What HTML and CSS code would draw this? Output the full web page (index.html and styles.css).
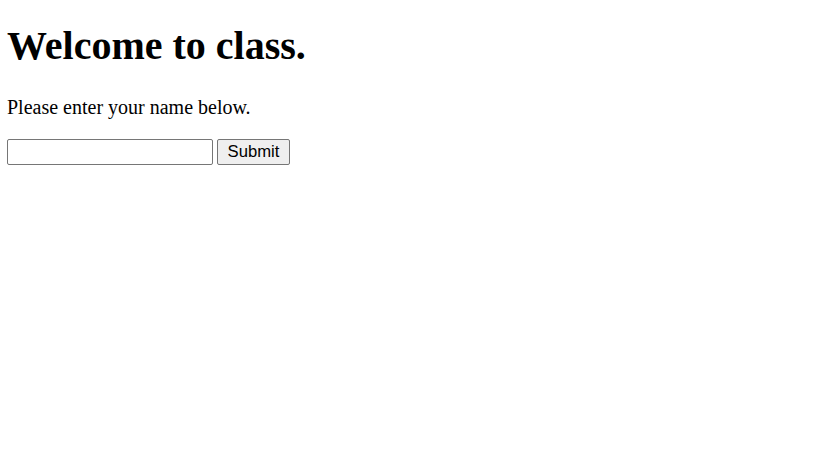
FILE: index.html
```html
<!DOCTYPE html>
<html>
<head>
<meta charset="utf-8">
<link rel="stylesheet" href="styles.css">
</head>
<body>
<h1 class="title">Welcome to class.</h1>
<p class="intro">Please enter your name below.</p>
<form class="name-form">
<input class="name-input" type="text">
<button class="submit-btn" type="button">Submit</button>
</form>
</body>
</html>
```

FILE: styles.css
```css
body {
  margin: 0 7px;
  font-family: "Liberation Serif", "Times New Roman", serif;
  color: #000;
  background: #fff;
}
.title {
  font-size: 40px;
  font-weight: bold;
  line-height: 44px;
  margin: 24px 0 28px;
}
.intro {
  font-size: 20px;
  line-height: 22px;
  margin: 0 0 21px;
}
.name-form {
  display: flex;
  gap: 4px;
  margin: 0;
}
.name-input {
  box-sizing: border-box;
  width: 206px;
  height: 26px;
  margin: 0;
  padding: 1px 3px;
  font-family: "Liberation Sans", Arial, sans-serif;
  font-size: 16.67px;
  border: 1px solid #767676;
  border-radius: 2px;
  background: #fff;
}
.submit-btn {
  box-sizing: border-box;
  width: 73px;
  height: 26px;
  margin: 0;
  padding: 0;
  font-family: "Liberation Sans", Arial, sans-serif;
  font-size: 16.67px;
  color: #000;
  border: 1px solid #767676;
  border-radius: 2px;
  background: #efefef;
}
```
